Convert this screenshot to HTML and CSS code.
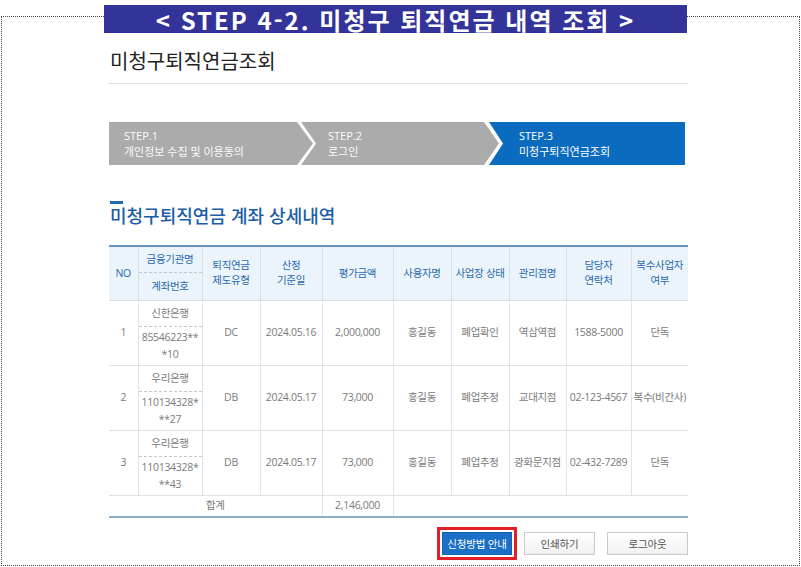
FILE: index.html
```html
<!DOCTYPE html>
<html lang="ko">
<head>
<meta charset="utf-8">
<title>미청구퇴직연금조회</title>
<link rel="stylesheet" href="styles.css">
</head>
<body>
<div class="frame">
  <div class="banner">&lt; STEP 4-2. 미청구 퇴직연금 내역 조회 &gt;</div>
  <div class="page">
    <h1 class="title">미청구퇴직연금조회</h1>
    <div class="steps">
      <div class="step s1"><span>STEP.1</span><span>개인정보 수집 및 이용동의</span></div>
      <div class="step s2"><span>STEP.2</span><span>로그인</span></div>
      <div class="step s3"><span>STEP.3</span><span>미청구퇴직연금조회</span></div>
    </div>
    <h2 class="sec-head">미청구퇴직연금 계좌 상세내역</h2>
    <table class="acct">
      <colgroup>
        <col class="c-no"><col class="c-bank"><col class="c-type"><col class="c-date"><col class="c-amt">
        <col class="c-user"><col class="c-stat"><col class="c-br"><col class="c-tel"><col class="c-multi">
      </colgroup>
      <thead>
        <tr class="h1">
          <th rowspan="2" class="no">NO</th>
          <th class="split">금융기관명</th>
          <th rowspan="2">퇴직연금<br>제도유형</th>
          <th rowspan="2">산정<br>기준일</th>
          <th rowspan="2">평가금액</th>
          <th rowspan="2">사용자명</th>
          <th rowspan="2">사업장 상태</th>
          <th rowspan="2">관리점명</th>
          <th rowspan="2">담당자<br>연락처</th>
          <th rowspan="2">복수사업자<br>여부</th>
        </tr>
        <tr class="h2"><th>계좌번호</th></tr>
      </thead>
      <tbody>
        <tr class="rb">
          <td rowspan="2" class="no">1</td>
          <td class="split">신한은행</td>
          <td rowspan="2">DC</td>
          <td rowspan="2">2024.05.16</td>
          <td rowspan="2">2,000,000</td>
          <td rowspan="2">홍길동</td>
          <td rowspan="2">폐업확인</td>
          <td rowspan="2">역삼역점</td>
          <td rowspan="2">1588-5000</td>
          <td rowspan="2">단독</td>
        </tr>
        <tr class="ra"><td>85546223**<br>*10</td></tr>
        <tr class="rb">
          <td rowspan="2" class="no">2</td>
          <td class="split">우리은행</td>
          <td rowspan="2">DB</td>
          <td rowspan="2">2024.05.17</td>
          <td rowspan="2">73,000</td>
          <td rowspan="2">홍길동</td>
          <td rowspan="2">폐업추정</td>
          <td rowspan="2">교대지점</td>
          <td rowspan="2">02-123-4567</td>
          <td rowspan="2">복수(비간사)</td>
        </tr>
        <tr class="ra"><td>110134328*<br>**27</td></tr>
        <tr class="rb">
          <td rowspan="2" class="no">3</td>
          <td class="split">우리은행</td>
          <td rowspan="2">DB</td>
          <td rowspan="2">2024.05.17</td>
          <td rowspan="2">73,000</td>
          <td rowspan="2">홍길동</td>
          <td rowspan="2">폐업추정</td>
          <td rowspan="2">광화문지점</td>
          <td rowspan="2">02-432-7289</td>
          <td rowspan="2">단독</td>
        </tr>
        <tr class="ra"><td>110134328*<br>**43</td></tr>
        <tr class="total">
          <td colspan="4" class="no">합계</td>
          <td>2,146,000</td>
          <td colspan="5"></td>
        </tr>
      </tbody>
    </table>
    <div class="btns">
      <button class="btn btn-primary" type="button">신청방법 안내</button>
      <button class="btn btn-print" type="button">인쇄하기</button>
      <button class="btn btn-logout" type="button">로그아웃</button>
    </div>
  </div>
</div>
</body>
</html>
```
FILE: styles.css
```css
body {
  margin: 0;
  background: #fff;
  font-family: "Open Sans", "Noto Sans CJK KR", sans-serif;
}

.frame {
  position: relative;
  margin: 16px 1px 0;
  height: 550px;
  box-sizing: border-box;
  border: 1px dotted #444;
}

.banner {
  position: absolute;
  top: -12px;
  left: 102px;
  width: 583px;
  height: 28px;
  background: #33339a;
  color: #fff;
  font-family: "Noto Sans CJK KR", sans-serif;
  font-weight: bold;
  font-size: 24px;
  letter-spacing: 2px;
  display: flex;
  align-items: center;
  justify-content: center;
  white-space: pre;
}

.page {
  margin-left: 106px;
  width: 580px;
  padding-top: 31px;
}

.title {
  margin: 0;
  padding: 0 0 9px 2px;
  font-family: "Noto Sans CJK KR", sans-serif;
  font-size: 20px;
  line-height: 26px;
  font-weight: normal;
  color: #222;
  border-bottom: 1px solid #ddd;
}

.steps {
  display: flex;
  margin: 38px 0 0 1px;
  height: 43px;
}

.step {
  height: 43px;
  box-sizing: border-box;
  display: flex;
  flex-direction: column;
  justify-content: center;
  font-size: 11px;
  line-height: 16px;
  color: #fafafa;
  flex: none;
}

.s1 {
  width: 204px;
  padding-left: 15px;
  background: #ababab;
  clip-path: polygon(0 0, 188px 0, 100% 50%, 188px 100%, 0 100%);
}

.s2 {
  width: 198px;
  margin-left: -12px;
  padding-left: 27px;
  background: #ababab;
  clip-path: polygon(0 0, 183px 0, 100% 50%, 183px 100%, 0 100%, 15px 50%);
}

.s3 {
  width: 196px;
  margin-left: -10px;
  padding-left: 30px;
  background: #0b6bbe;
  color: #fff;
  clip-path: polygon(0 0, 100% 0, 100% 100%, 0 100%, 14px 50%);
}

.sec-head {
  margin: 36px 0 0 2px;
  font-family: "Noto Sans CJK KR", sans-serif;
  font-size: 18px;
  line-height: 22px;
  font-weight: 500;
  color: #1b5da6;
}

.sec-head::before {
  content: "";
  display: block;
  width: 13px;
  height: 3px;
  background: #1f6cb5;
}

.acct {
  margin: 19px 0 0 1px;
  width: 579px;
  table-layout: fixed;
  border-collapse: collapse;
  border-top: 2px solid #6a93b6;
  border-bottom: 2px solid #8db0c8;
}

.c-no { width: 29px; }
.c-bank { width: 64px; }
.c-type { width: 58px; }
.c-date { width: 62px; }
.c-amt { width: 71px; }
.c-user { width: 58px; }
.c-stat { width: 58px; }
.c-br { width: 57px; }
.c-tel { width: 65px; }
.c-multi { width: 57px; }

.acct th,
.acct td {
  padding: 0;
  text-align: center;
  vertical-align: middle;
  font-size: 10.5px;
  letter-spacing: -0.3px;
  white-space: nowrap;
}

.acct th {
  background: #ebf4fb;
  color: #2a69ad;
  font-weight: normal;
  line-height: 15px;
  border-left: 1px solid #d5e0ea;
  border-bottom: 1px solid #d5e0ea;
}

.acct td {
  color: #7a7a7a;
  line-height: 17px;
  border-left: 1px solid #e0e4e8;
  border-bottom: 1px solid #dde1e6;
}

.acct .no {
  border-left: none;
}

.acct th.split,
.acct td.split {
  border-bottom: 1px dashed #c8c8c8;
}

.acct th.split { border-bottom-color: #b9c9d8; }

.h1 { height: 26px; }
.h2 { height: 28px; }
.rb { height: 26px; }
.ra { height: 39px; }
.total { height: 22px; }

.btns {
  display: flex;
  justify-content: flex-end;
  gap: 12px;
  margin-top: 14px;
}

.btn {
  height: 23px;
  box-sizing: border-box;
  margin: 0;
  padding: 0;
  border: 1px solid #c9c9c9;
  background: linear-gradient(#ffffff, #f1f1f1);
  color: #555;
  font-family: "Noto Sans CJK KR", sans-serif;
  font-size: 10.5px;
  letter-spacing: -0.2px;
}

.btn-primary {
  width: 70px;
  background: #1a6fc6;
  border-color: #135fb0;
  color: #fff;
  outline: 3px solid #e3202a;
  outline-offset: 2px;
}

.btn-print { width: 71px; }
.btn-logout { width: 81px; }
```
